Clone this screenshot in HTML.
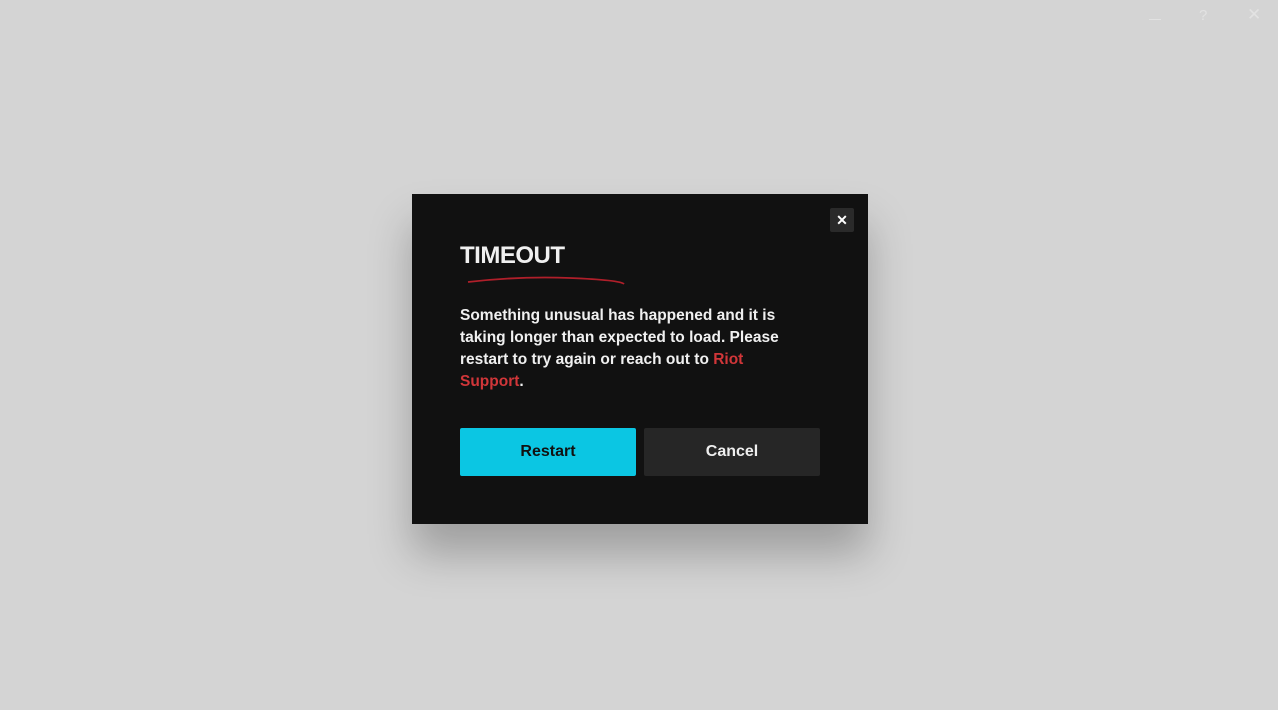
<!DOCTYPE html>
<html><head><style>
body{margin:0;width:1278px;height:710px;background:#d4d4d4;position:relative;overflow:hidden;font-family:"Liberation Sans",sans-serif}
.modal{position:absolute;left:412px;top:194px;width:456px;height:330px;background:#111;box-shadow:0 30px 40px rgba(0,0,0,.25)}
.x{position:absolute;left:418px;top:14px;width:24px;height:24px;background:#2a2a2a;border-radius:2px;color:#fff;font-size:14px;font-weight:bold;text-align:center;line-height:24px}
h1{position:absolute;left:48px;top:48px;margin:0;color:#f0f0f0;font-size:24px;font-weight:bold;letter-spacing:-0.5px}
p{position:absolute;left:48px;top:111px;width:350px;margin:0;color:#f0f0f0;font-size:15.5px;font-weight:bold;line-height:22px}
.r{color:#d13639}
.b{position:absolute;top:234px;width:176px;height:48px;border-radius:2px;font-size:16px;font-weight:bold;text-align:center;line-height:48px}
</style></head><body>
<div style="position:absolute;left:1149px;top:19px;width:12px;height:1px;background:#e2e2e2"></div>
<div style="position:absolute;left:1199px;top:7px;color:#e2e2e2;font-size:15px">?</div>
<div style="position:absolute;left:1247px;top:5px;color:#e2e2e2;font-size:17px">✕</div>
<div class="modal">
<div class="x">✕</div>
<h1>TIMEOUT</h1>
<svg style="position:absolute;left:48px;top:78px" width="170" height="16"><path d="M8 10 Q60 4 110 6 T164 12" stroke="#b01f2a" stroke-width="1.8" fill="none"/></svg>
<p>Something unusual has happened and it is taking longer than expected to load. Please restart to try again or reach out to <span class="r">Riot Support</span>.</p>
<div class="b" style="left:48px;background:#0bc6e3;color:#111">Restart</div>
<div class="b" style="left:232px;background:#262626;color:#eee">Cancel</div>
</div>
</body></html>
